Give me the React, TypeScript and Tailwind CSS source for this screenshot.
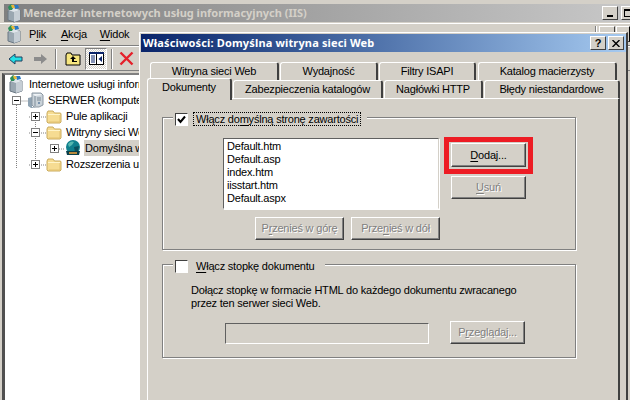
import React from "react";

const Folder = () => (
  <svg width="16" height="15" viewBox="0 0 16 15" className="shrink-0">
    <path d="M1 4 L2 2 H7 L8.5 4 H14.5 L15 5 V13 L14 14 H2 L1 13 Z" fill="#f6dc92" stroke="#c9ab5e" strokeWidth="1" />
    <path d="M2 5 H14 V6 H2 Z" fill="#fff4c8" />
    <path d="M14 6 V13 H3" fill="none" stroke="#e3c271" />
  </svg>
);

const Server = () => (
  <svg width="17" height="17" viewBox="0 0 17 17" className="shrink-0">
    <path d="M1 6 L5 5 V15 L9 16 H4 L1 14 Z" fill="#8fa3b3" />
    <path d="M5 1 H14 L16 3 V13 L12 15 H7 L5 13 Z" fill="#c9d2d9" stroke="#8c98a3" />
    <path d="M6 2 H13 L15 3 L8 4 Z" fill="#eef2f5" />
    <path d="M8 4 V14" stroke="#7f8d99" />
    <path d="M10 6 H14 M10 8 H14" stroke="#7d8a96" />
    <circle cx="12" cy="11" r="1" fill="#5f7f9f" />
  </svg>
);

const RootIcon = () => (
  <svg width="16" height="19" viewBox="0 0 16 19" className="shrink-0">
    <path d="M2 7 L7 5 L14 6 V16 L8 18 L2 16 Z" fill="#9aa7b1" stroke="#6b7884" />
    <path d="M8 8 V18 L14 16 V6 Z" fill="#c6ced5" />
    <path d="M2 6 L8 8 L14 6 L8 4 Z" fill="#dfe5ea" />
    <path d="M2 3 L5 0 L8 2 L6 6 L3 6 Z" fill="#2d8f5a" />
    <path d="M8 1 L12 1 L13 4 L9 5 Z" fill="#2878c4" />
    <path d="M5 1 L8 1 L9 4 L6 4 Z" fill="#e4b93a" />
  </svg>
);

const Globe = () => (
  <svg width="16" height="16" viewBox="0 0 16 16" className="shrink-0">
    <circle cx="8" cy="7" r="7" fill="#0f7f8c" />
    <path d="M3 4 C5 1 8 1 9 2 L7 5 L4 7 Z" fill="#55b8b0" />
    <path d="M9 7 L14 6 L13 11 L10 12 Z" fill="#0b4f5c" />
    <path d="M1 11 H15 L14 15 H2 Z" fill="#0a3f4a" />
    <path d="M4 12 H12 V14 H4 Z" fill="#b98a3c" />
  </svg>
);

const Box = ({ plus }: { plus?: boolean }) => (
  <svg width="9" height="9" viewBox="0 0 9 9" className="shrink-0 relative">
    <rect x="0.5" y="0.5" width="8" height="8" fill="#fff" stroke="#808080" />
    <path d={plus ? "M2 4.5 H7 M4.5 2 V7" : "M2 4.5 H7"} stroke="#000" />
  </svg>
);

const Row = ({
  pl,
  plus,
  hasBox = true,
  icon,
  text,
  selected,
}: {
  pl: number;
  plus?: boolean;
  hasBox?: boolean;
  icon: React.ReactNode;
  text: string;
  selected?: boolean;
}) => (
  <div className="flex h-4 items-center whitespace-nowrap relative" style={{ paddingLeft: pl }}>
    {hasBox && <Box plus={plus} />}
    <span className={hasBox ? "ml-[6px] flex" : "flex"}>{icon}</span>
    <span className={selected ? "ml-[3px] bg-[#d4d0c8] pl-px pr-8 h-4 leading-4" : hasBox ? "ml-[3px] pl-px pr-1 h-4 leading-4" : "ml-[4px] pl-px pr-1 h-4 leading-4"}>
      {text}
    </span>
  </div>
);

const U = ({ children }: { children: React.ReactNode }) => <span className="underline underline-offset-[2px]">{children}</span>;

const Btn = ({
  w,
  h,
  disabled,
  children,
}: {
  w: string;
  h: string;
  disabled?: boolean;
  children: React.ReactNode;
}) => (
  <div
    className={`${w} ${h} flex items-center justify-center border border-t-white border-l-white border-r-[#404040] border-b-[#404040] shadow-[inset_-1px_-1px_0_#808080] bg-[#d4d0c8] ${
      disabled ? "text-[#808080] [text-shadow:1px_1px_0_#fff]" : "text-black"
    }`}
  >
    {children}
  </div>
);

const Tab = ({ w, h, active, children, cls }: { w: string; h: string; active?: boolean; children: React.ReactNode; cls?: string }) => (
  <div
    className={`${w} ${h} ${cls ?? ""} ${active ? "relative z-20 pb-[4px]" : ""} flex shrink-0 items-center justify-center rounded-t-[3px] border-t border-l border-r-2 border-t-white border-l-white border-r-[#404040] bg-[#d4d0c8] whitespace-nowrap`}
  >
    {children}
  </div>
);

export default function App() {
  return (
    <div className="relative h-[400px] w-[630px] overflow-hidden bg-[#d4d0c8] font-['Liberation_Sans',sans-serif] text-[11px] tracking-[-0.2px] text-black">
      {/* Back window */}
      <div className="flex h-[400px] flex-col pt-[4px]">
        <div className="ml-[4px] flex h-[18px] items-center bg-gradient-to-r from-[#808080] to-[#c8c8c8]">
          <span className="ml-[2px] flex"><RootIcon /></span>
          <span className="ml-[1px] font-['Noto_Sans',sans-serif] font-bold text-[11px] tracking-normal text-[#d4d0c8]">Menedżer internetowych usług informacyjnych (IIS)</span>
          <div className="ml-auto -mr-[7px] flex gap-[3px]">
            <div className="flex h-[14px] w-[16px] items-end justify-center border border-t-white border-l-white border-r-[#404040] border-b-[#404040] bg-[#d4d0c8] pb-[2px]">
              <div className="h-[2px] w-[6px] bg-black" />
            </div>
            <div className="flex h-[14px] w-[16px] border border-t-white border-l-white border-r-[#404040] border-b-[#404040] bg-[#d4d0c8] p-[2px]">
              <div className="h-full w-full border border-t-2 border-black" />
            </div>
          </div>
        </div>
        <div className="mt-[1px] flex h-[23px] items-center border-t border-t-white border-b border-b-[#808080]">
          <span className="ml-[6px] flex"><RootIcon /></span>
          <span className="ml-[7px]">P<U>l</U>ik</span>
          <span className="ml-[15px]"><U>A</U>kcja</span>
          <span className="ml-[13px]"><U>W</U>idok</span>
          <div className="ml-auto flex h-[21px] items-start pt-[2px]">
            <div className="h-[18px] w-[2px] border-l border-l-[#808080] border-r border-r-white" />
            <div className="ml-[2px] h-[16px] w-[16px] border border-t-white border-l-white border-r-[#404040] border-b-[#404040]" />
            <div className="ml-[1px] h-[16px] w-[14px] border border-t-white border-l-white border-b-[#404040]" />
          </div>
        </div>
        <div className="flex h-[25px] items-center border-t border-t-white border-b border-b-[#808080]">
          <svg width="16" height="12" viewBox="0 0 16 12" className="ml-[8px]">
            <path d="M1 6 L7 1 V4 H14 V8 H7 V11 Z" fill="#22e0e6" stroke="#1f3f5f" />
          </svg>
          <svg width="16" height="12" viewBox="0 0 16 12" className="ml-[8px]">
            <path d="M15 6 L9 1 V4 H2 V8 H9 V11 Z" fill="#8c8c8c" />
          </svg>
          <div className="ml-[7px] h-[20px] w-[2px] border-l border-l-[#808080] border-r border-r-white" />
          <svg width="16" height="14" viewBox="0 0 16 14" className="ml-[8px]">
            <path d="M1 3 L2 1 H6 L7 3 H15 V13 H1 Z" fill="#f7e67e" stroke="#000" />
            <path d="M8 4 L5 7 H7 V10 H12 V9 H9 V7 H11 Z" fill="#000" />
          </svg>
          <div className="ml-[4px] flex h-[22px] w-[22px] items-center justify-center border border-t-[#808080] border-l-[#808080] border-r-white border-b-white bg-[repeating-conic-gradient(#ffffff_0_25%,#d4d0c8_0_50%)] bg-[length:2px_2px]">
            <svg width="15" height="13" viewBox="0 0 15 13">
              <rect x="0.5" y="0.5" width="14" height="12" fill="#fff" stroke="#000" />
              <path d="M0 0 H15 V2 H0 Z" fill="#0a246a" />
              <path d="M2 4 H6 M2 6 H6 M2 8 H6 M2 10 H6" stroke="#0a246a" />
              <path d="M7.5 2 V12" stroke="#000" />
              <path d="M13 4 V10 L9.5 7 Z" fill="#0a246a" />
            </svg>
          </div>
          <div className="ml-[4px] h-[20px] w-[2px] border-l border-l-[#808080] border-r border-r-white" />
          <svg width="15" height="15" viewBox="0 0 15 15" className="ml-[6px]">
            <path d="M1.5 1.5 L13.5 13.5 M13.5 1.5 L1.5 13.5" stroke="#e5202a" strokeWidth="2.4" />
          </svg>
        </div>
        <div className="relative ml-[2px] mt-[2px] w-[137px] flex-1 overflow-hidden border-l-[3px] border-t-2 border-l-[#505050] border-t-[#808080] bg-white pt-[1px]">
          <svg width="70" height="100" className="absolute left-0 top-0">
            <path d="M11.5 30 V94 M11.5 26 H24 M30.5 37 V89 M24 42 H30 M24 58 H30 M24 90 H30 M50 74 H60 M30 42 H42 M30 58 H42 M30 90 H42" fill="none" stroke="#808080" strokeDasharray="1 1" />
          </svg>
          <Row pl={3} hasBox={false} icon={<RootIcon />} text="Internetowe usługi informacyjne" />
          <Row pl={7} icon={<Server />} text="SERWER (komputer lokalny)" />
          <Row pl={26} plus icon={<Folder />} text="Pule aplikacji" />
          <Row pl={26} icon={<Folder />} text="Witryny sieci Web" />
          <Row pl={45} plus icon={<Globe />} text="Domyślna witryna sieci Web" selected />
          <Row pl={26} plus icon={<Folder />} text="Rozszerzenia usługi sieci Web" />
        </div>
      </div>

      {/* Dialog */}
      <div className="absolute left-[139px] top-[32px] h-[400px] w-[489px] border-t border-l border-t-white border-l-white border-r-2 border-r-[#404040] bg-[#d4d0c8] pl-[1px] pt-[1px]">
        <div className="flex h-[18px] items-center bg-gradient-to-r from-[#0a246a] to-[#a6caf0] pl-[2px] pr-[2px]">
          <span className="font-['Noto_Sans',sans-serif] font-bold text-[11px] tracking-[0.15px] text-white">Właściwości: Domyślna witryna sieci Web</span>
          <div className="ml-auto flex gap-[2px]">
            <div className="flex h-[14px] w-[16px] items-center justify-center border border-t-white border-l-white border-r-[#404040] border-b-[#404040] bg-[#d4d0c8] font-bold text-[11px]">?</div>
            <div className="flex h-[14px] w-[16px] items-center justify-center border border-t-white border-l-white border-r-[#404040] border-b-[#404040] bg-[#d4d0c8]">
              <svg width="8" height="7" viewBox="0 0 8 7"><path d="M0.5 0 L7.5 7 M7.5 0 L0.5 7" stroke="#000" strokeWidth="1.4" /></svg>
            </div>
          </div>
        </div>
        <div className="pl-[6px] pt-[10px]">
          <div className="ml-[3px] flex h-[18px] gap-px">
            <Tab w="w-[129px]" h="h-[18px]">Witryna sieci Web</Tab>
            <Tab w="w-[98px]" h="h-[18px]">Wydajność</Tab>
            <Tab w="w-[97px]" h="h-[18px]">Filtry ISAPI</Tab>
            <Tab w="w-[139px]" h="h-[18px]" cls="ml-px">Katalog macierzysty</Tab>
          </div>
          <div className="flex h-[18px] items-end">
            <Tab w="w-[85px]" h="h-[22px]" active cls="-mb-[2px]">Dokumenty</Tab>
            <Tab w="w-[150px]" h="h-[18px]" cls="ml-px">Zabezpieczenia katalogów</Tab>
            <Tab w="w-[99px]" h="h-[18px]" cls="ml-px">Nagłówki HTTP</Tab>
            <Tab w="w-[136px]" h="h-[18px]" cls="ml-px">Błędy niestandardowe</Tab>
          </div>
          <div className="h-[400px] w-[473px] border-t border-l border-t-white border-l-white border-r-2 border-r-[#404040] pl-[14px] pt-[18px]">
            {/* Group 1 */}
            <div className="relative h-[133px] w-[414px] border border-[#808080] shadow-[1px_1px_0_#fff,inset_1px_1px_0_#fff]">
              <div className="absolute left-[10px] -top-[6px] flex h-[14px] items-center bg-[#d4d0c8] pl-[2px] pr-[6px]">
                <div className="flex h-[13px] w-[13px] items-center justify-center border border-t-[#404040] border-l-[#404040] border-r-white border-b-white bg-white">
                  <svg width="9" height="9" viewBox="0 0 9 9"><path d="M1 4 L3.5 7 L8 1.5" fill="none" stroke="#000" strokeWidth="2" /></svg>
                </div>
                <div className="ml-[5px] h-[14px] border border-dotted border-black px-[2px] leading-[12px]">
                  Włącz do<U>m</U>yślną stronę zawartości
                </div>
              </div>
              <div className="flex pl-[60px] pt-[20px]">
                <div className="flex flex-col">
                  <div className="h-[71px] w-[216px] border border-t-[#606060] border-l-[#606060] border-r-[#d4d0c8] border-b-white bg-white pl-[3px] pt-px leading-[13px] shadow-[1px_1px_0_#fff]">
                    <div>Default.htm</div>
                    <div>Default.asp</div>
                    <div>index.htm</div>
                    <div>iisstart.htm</div>
                    <div>Default.aspx</div>
                  </div>
                  <div className="ml-[32px] mt-[8px] flex gap-[7px]">
                    <Btn w="w-[89px]" h="h-[23px]" disabled>P<U>r</U>zenieś w górę</Btn>
                    <Btn w="w-[89px]" h="h-[23px]" disabled>Prze<U>n</U>ieś w dół</Btn>
                  </div>
                </div>
                <div className="ml-[11px] flex flex-col pt-[5px]">
                  <div className="relative">
                    <Btn w="w-[75px]" h="h-[24px]"><span><U>D</U>odaj...</span></Btn>
                    <div className="pointer-events-none absolute -left-[7px] -top-[6px] h-[37px] w-[89px] border-[5px] border-[#ed1c24]" />
                  </div>
                  <div className="mt-[9px]">
                    <Btn w="w-[75px]" h="h-[23px]" disabled><span><U>U</U>suń</span></Btn>
                  </div>
                </div>
              </div>
            </div>
            {/* Group 2 */}
            <div className="relative mt-[14px] h-[94px] w-[414px] border border-[#808080] shadow-[1px_1px_0_#fff,inset_1px_1px_0_#fff]">
              <div className="absolute left-[10px] -top-[6px] flex h-[14px] items-center bg-[#d4d0c8] pl-[2px] pr-[8px]">
                <div className="h-[13px] w-[13px] border border-t-[#404040] border-l-[#404040] border-r-white border-b-white bg-white" />
                <div className="ml-[6px] px-[2px]"><U>W</U>łącz stopkę dokumentu</div>
              </div>
              <div className="pl-[28px] pt-[19px] leading-[13px]">
                <div>Dołącz stopkę w formacie HTML do każdego dokumentu zwracanego</div>
                <div>przez ten serwer sieci Web.</div>
              </div>
              <div className="flex items-end pl-[62px] pt-[11px]">
                <div className="h-[21px] w-[204px] border border-t-[#606060] border-l-[#606060] border-r-white border-b-white" />
                <div className="ml-[21px]">
                  <Btn w="w-[75px]" h="h-[23px]" disabled><span>P<span className="underline">r</span>zeglądaj...</span></Btn>
                </div>
              </div>
            </div>
          </div>
        </div>
      </div>
    </div>
  );
}
